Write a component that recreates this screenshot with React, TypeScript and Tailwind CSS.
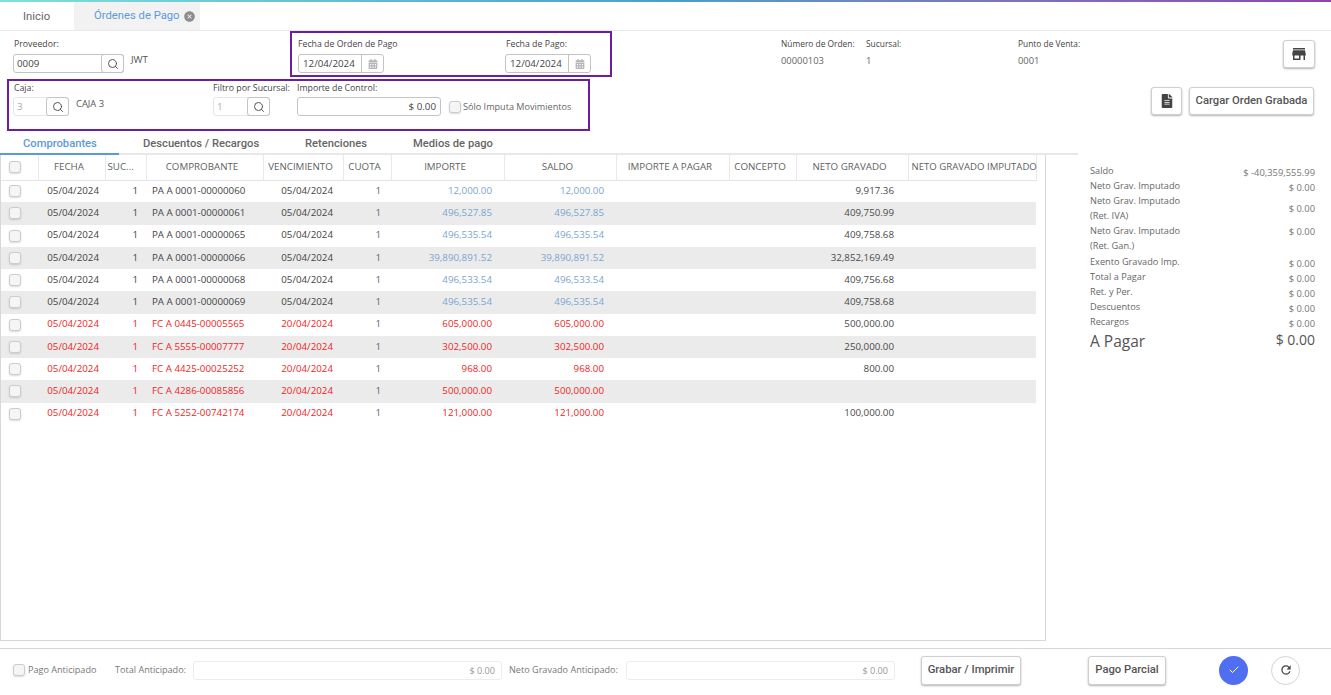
import React from 'react';
import { FaCalendarAlt, FaFileAlt } from 'react-icons/fa';
import { IoCloseCircle } from 'react-icons/io5';
import { MdStore, MdRefresh } from 'react-icons/md';
import { Search, Check } from 'lucide-react';

const sans = "font-['Open_Sans',sans-serif]";
const roboto = "font-['Roboto',sans-serif]";

type Row = {
  fecha: string;
  comp: string;
  venc: string;
  importe: string;
  saldo: string;
  neto: string;
};

const pagos: Row[] = [
  { fecha: '05/04/2024', comp: 'PA A 0001-00000060', venc: '05/04/2024', importe: '12,000.00', saldo: '12,000.00', neto: '9,917.36' },
  { fecha: '05/04/2024', comp: 'PA A 0001-00000061', venc: '05/04/2024', importe: '496,527.85', saldo: '496,527.85', neto: '409,750.99' },
  { fecha: '05/04/2024', comp: 'PA A 0001-00000065', venc: '05/04/2024', importe: '496,535.54', saldo: '496,535.54', neto: '409,758.68' },
  { fecha: '05/04/2024', comp: 'PA A 0001-00000066', venc: '05/04/2024', importe: '39,890,891.52', saldo: '39,890,891.52', neto: '32,852,169.49' },
  { fecha: '05/04/2024', comp: 'PA A 0001-00000068', venc: '05/04/2024', importe: '496,533.54', saldo: '496,533.54', neto: '409,756.68' },
  { fecha: '05/04/2024', comp: 'PA A 0001-00000069', venc: '05/04/2024', importe: '496,535.54', saldo: '496,535.54', neto: '409,758.68' },
];

const facturas: Row[] = [
  { fecha: '05/04/2024', comp: 'FC A 0445-00005565', venc: '20/04/2024', importe: '605,000.00', saldo: '605,000.00', neto: '500,000.00' },
  { fecha: '05/04/2024', comp: 'FC A 5555-00007777', venc: '20/04/2024', importe: '302,500.00', saldo: '302,500.00', neto: '250,000.00' },
  { fecha: '05/04/2024', comp: 'FC A 4425-00025252', venc: '20/04/2024', importe: '968.00', saldo: '968.00', neto: '800.00' },
  { fecha: '05/04/2024', comp: 'FC A 4286-00085856', venc: '20/04/2024', importe: '500,000.00', saldo: '500,000.00', neto: '' },
  { fecha: '05/04/2024', comp: 'FC A 5252-00742174', venc: '20/04/2024', importe: '121,000.00', saldo: '121,000.00', neto: '100,000.00' },
];

const resumen = [
  { label: 'Saldo', value: '$ -40,359,555.99', h: 'h-[15px]', pt: 'pt-[2px]' },
  { label: 'Neto Grav. Imputado', value: '$ 0.00', h: 'h-[15px]', pt: 'pt-[2px]' },
  { label: 'Neto Grav. Imputado (Ret. IVA)', value: '$ 0.00', h: 'h-[30px]', pt: 'pt-[8px]' },
  { label: 'Neto Grav. Imputado (Ret. Gan.)', value: '$ 0.00', h: 'h-[31px]', pt: 'pt-[1px]' },
  { label: 'Exento Gravado Imp.', value: '$ 0.00', h: 'h-[15px]', pt: 'pt-[2px]' },
  { label: 'Total a Pagar', value: '$ 0.00', h: 'h-[15px]', pt: 'pt-[2px]' },
  { label: 'Ret. y Per.', value: '$ 0.00', h: 'h-[15px]', pt: 'pt-[2px]' },
  { label: 'Descuentos', value: '$ 0.00', h: 'h-[15px]', pt: 'pt-[2px]' },
  { label: 'Recargos', value: '$ 0.00', h: 'h-[15px]', pt: 'pt-[2px]' },
];

const Box = () => (
  <span className="block w-[12px] h-[12px] rounded-[3px] border border-[#cccccc] bg-[#f5f5f5] shadow-[0_1px_2px_rgba(0,0,0,0.15)] shrink-0" />
);

const Label = ({ children, className = '' }: { children: React.ReactNode; className?: string }) => (
  <div className={`leading-[12px] text-[#444] whitespace-nowrap ${className}`}>{children}</div>
);

const SearchInput = ({ value, w, off }: { value: string; w: string; off?: boolean }) => (
  <div className={`flex h-[19px] ${w} border ${off ? 'border-[#e6e6e6]' : 'border-[#c4c4c4]'} rounded-[3px] bg-white`}>
    <span className={`flex-1 pl-[3px] text-[9.75px] leading-[18px] ${off ? 'text-[#aaa]' : 'text-[#444]'}`}>{value}</span>
    <span className="w-[23px] -my-[1px] -mr-[1px] flex items-center justify-center border border-[#c4c4c4] rounded-[3px]">
      <Search size={12} strokeWidth={2} className="text-[#555]" />
    </span>
  </div>
);

const DateInput = ({ value }: { value: string }) => (
  <div className="flex h-[19px] w-[86px] border border-[#c4c4c4] rounded-[3px] bg-white">
    <span className="flex-1 pl-[4px] text-[9.75px] leading-[18px] text-[#444]">{value}</span>
    <span className="w-[22px] flex items-center justify-center border-l border-[#c4c4c4]">
      <FaCalendarAlt size={10} className="text-[#b5b5b5]" />
    </span>
  </div>
);

const OutlineButton = ({ children, className = '' }: { children: React.ReactNode; className?: string }) => (
  <div className={`flex items-center justify-center border border-[#cfcfcf] rounded-[3px] bg-white shadow-[0_1px_2px_rgba(0,0,0,0.3)] ${roboto} font-medium text-[11.25px] text-[#555] whitespace-nowrap ${className}`}>
    {children}
  </div>
);

const headers = ['FECHA', 'SUC...', 'COMPROBANTE', 'VENCIMIENTO', 'CUOTA', 'IMPORTE', 'SALDO', 'IMPORTE A PAGAR', 'CONCEPTO', 'NETO GRAVADO', 'NETO GRAVADO IMPUTADO'];

const Table = () => {
  const filas = [...pagos.map((r) => ({ ...r, rojo: false })), ...facturas.map((r) => ({ ...r, rojo: true }))];
  return (
    <table className="table-fixed border-collapse w-[1035px] text-[9.75px] text-[#444]">
      <colgroup>
        <col className="w-[37px]" />
        <col className="w-[67px]" />
        <col className="w-[41px]" />
        <col className="w-[117px]" />
        <col className="w-[80px]" />
        <col className="w-[48px]" />
        <col className="w-[113px]" />
        <col className="w-[112px]" />
        <col className="w-[113px]" />
        <col className="w-[67px]" />
        <col className="w-[112px]" />
        <col className="w-[128px]" />
      </colgroup>
      <thead>
        <tr className="h-[25px] border-b border-[#e4e4e4]">
          <th className="border-r border-[#e9e9e9] pl-[8px] pr-0">
            <Box />
          </th>
          {headers.map((h) => (
            <th
              key={h}
              className={`border-r border-[#e9e9e9] font-medium text-[#5f5f5f] whitespace-nowrap ${
                h === 'SUC...'
                  ? 'text-[9.75px] text-left pl-[2px]'
                  : h === 'NETO GRAVADO IMPUTADO'
                    ? 'text-[9.6px] text-left pl-[3px]'
                    : 'text-[9.75px] text-center pr-[5px]'
              }`}
            >
              {h}
            </th>
          ))}
        </tr>
      </thead>
      <tbody>
        {filas.map((r, i) => (
          <tr key={r.comp} className={`h-[22.25px] ${i % 2 === 1 ? 'bg-[#ebebeb]' : 'bg-white'} ${r.rojo ? 'text-[#f02525]' : ''}`}>
            <td className="pl-[8px]">
              <Box />
            </td>
            <td className="text-right pr-[6px]">{r.fecha}</td>
            <td className="text-right pr-[8px]">1</td>
            <td className="pl-[6px] whitespace-nowrap">{r.comp}</td>
            <td className="text-right pr-[10px]">{r.venc}</td>
            <td className="text-right pr-[10px] text-[#56687a]">1</td>
            <td className={`text-right pr-[12px] ${r.rojo ? '' : 'text-[#7ba5d0]'}`}>{r.importe}</td>
            <td className={`text-right pr-[12px] ${r.rojo ? '' : 'text-[#7ba5d0]'}`}>{r.saldo}</td>
            <td />
            <td />
            <td className="text-right pr-[14px] text-[#4a4a4a]">{r.neto}</td>
            <td />
          </tr>
        ))}
      </tbody>
    </table>
  );
};

const Summary = () => (
  <div className="w-[225px] ml-[44px] pt-[8px] text-[#666] shrink-0">
    {resumen.map((r) => (
      <div key={r.label} className={`flex justify-between items-start ${r.h} leading-[15px]`}>
        <span className="w-[100px] text-[9.2px]">{r.label}</span>
        <span className={`text-[9.4px] text-[#777] ${r.pt}`}>{r.value}</span>
      </div>
    ))}
    <div className="flex justify-between items-center text-[#555]">
      <span className="text-[15.5px] leading-[24px]">A Pagar</span>
      <span className="text-[14px] leading-[20px] pb-[3px]">$ 0.00</span>
    </div>
  </div>
);

const App = () => {
  return (
    <div className={`w-[1331px] h-[695px] overflow-hidden bg-white flex flex-col ${sans}`}>
      <div className="h-[2px] w-full shrink-0 bg-gradient-to-r from-[#7fe0da] via-[#4a9fc9] to-[#8e44ad]" />

      {/* pestañas */}
      <div className="flex h-[29px] shrink-0 border-b border-[#e8e8e8]">
        <div className={`w-[74px] pl-[23px] leading-[29px] text-[11.25px] text-[#666] ${roboto}`}>Inicio</div>
        <div className={`w-[126px] pl-[20px] flex items-center gap-[3px] bg-[#f2f2f2] text-[11.25px] text-[#5b9ad8] ${roboto}`}>
          <span>Órdenes de Pago</span>
          <IoCloseCircle size={13} className="text-[#8c8c8c]" />
        </div>
      </div>

      {/* primera fila */}
      <div className="flex h-[48px] shrink-0">
        <div className="w-[290px] pl-[13px] pt-[7px] shrink-0">
          <Label className="pl-[1px] text-[8.75px]">Proveedor:</Label>
          <div className="flex mt-[4px] gap-[7px]">
            <SearchInput value="0009" w="w-[111px]" />
            <span className="text-[9.75px] leading-[12px] text-[#555]">JWT</span>
          </div>
        </div>
        <div className="flex w-[322px] h-[46px] border-2 border-[#6a1ea0] pl-[6px] pt-[5px] shrink-0">
          <div className="w-[207px]">
            <Label className="text-[8.75px]">Fecha de Orden de Pago</Label>
            <div className="mt-[4px]">
              <DateInput value="12/04/2024" />
            </div>
          </div>
          <div>
            <Label className="pl-[1px] text-[8.75px]">Fecha de Pago:</Label>
            <div className="mt-[4px]">
              <DateInput value="12/04/2024" />
            </div>
          </div>
        </div>
        <div className="flex pt-[7px] pl-[169px] text-[#555]">
          <div className="w-[85px]">
            <Label className="text-[8.4px]">Número de Orden:</Label>
            <div className="text-[9.4px] leading-[12px] mt-[5px] text-[#666]">00000103</div>
          </div>
          <div className="w-[152px]">
            <Label className="text-[8.4px]">Sucursal:</Label>
            <div className="text-[9.4px] leading-[12px] mt-[5px] text-[#666]">1</div>
          </div>
          <div className="w-[265px]">
            <Label className="text-[8.4px]">Punto de Venta:</Label>
            <div className="text-[9.4px] leading-[12px] mt-[5px] text-[#666]">0001</div>
          </div>
          <OutlineButton className="w-[32px] h-[28px] mt-[2px]">
            <MdStore size={18} className="text-[#444]" />
          </OutlineButton>
        </div>
      </div>

      {/* segunda fila */}
      <div className="flex h-[52px] shrink-0 pl-[7px]">
        <div className="flex w-[583px] h-[52px] border-2 border-[#6a1ea0] pl-[4px] pt-[1px] shrink-0">
          <div className="w-[200px]">
            <Label className="pl-[1px] text-[8.75px]">Caja:</Label>
            <div className="flex mt-[3px] gap-[7px]">
              <SearchInput value="3" w="w-[56px]" off />
              <span className="text-[9.4px] leading-[14px] text-[#555]">CAJA 3</span>
            </div>
          </div>
          <div className="w-[84px]">
            <Label className="text-[8.8px]">Filtro por Sucursal:</Label>
            <div className="mt-[3px]">
              <SearchInput value="1" w="w-[57px]" off />
            </div>
          </div>
          <div className="w-[152px]">
            <Label className="text-[8.75px]">Importe de Control:</Label>
            <div className="mt-[3px] h-[19px] w-[144px] border border-[#c4c4c4] rounded-[3px] pr-[4px] text-right text-[9.75px] leading-[18px] text-[#444]">
              $ 0.00
            </div>
          </div>
          <div className="flex items-center gap-[2px] h-[19px] mt-[15px]">
            <Box />
            <span className="text-[9.1px] text-[#666] whitespace-nowrap">Sólo Imputa Movimientos</span>
          </div>
        </div>
        <div className="flex gap-[7px] pl-[561px] pt-[8px]">
          <OutlineButton className="w-[31px] h-[28px]">
            <FaFileAlt size={14} className="text-[#444]" />
          </OutlineButton>
          <OutlineButton className="w-[125px] h-[28px]">Cargar Orden Grabada</OutlineButton>
        </div>
      </div>

      {/* pestañas del detalle */}
      <div className={`flex h-[24px] w-[1078px] shrink-0 border-b-2 border-[#e8e8e8] text-[11.2px] font-medium text-[#666] ${roboto}`}>
        <div className="w-[119px] h-[24px] pl-[23px] leading-[25px] border-b-2 border-[#5b9ad8] text-[#5b9ad8]">Comprobantes</div>
        <div className="w-[186px] pl-[24px] leading-[25px]">Descuentos / Recargos</div>
        <div className="w-[108px] leading-[25px]">Retenciones</div>
        <div className="leading-[25px]">Medios de pago</div>
      </div>

      {/* cuerpo */}
      <div className="flex h-[486px] shrink-0">
        <div className="w-[1046px] h-[486px] border-x border-b border-[#d8d8d8] shrink-0">
          <Table />
        </div>
        <Summary />
      </div>

      {/* pie */}
      <div className="flex items-center h-[40px] mt-[7px] border-t border-[#d8d8d8] pl-[13px] pt-[3px] text-[9.1px] text-[#777] shrink-0">
        <Box />
        <span className="ml-[3px] w-[87px] whitespace-nowrap">Pago Anticipado</span>
        <span className="w-[78px] whitespace-nowrap">Total Anticipado:</span>
        <div className="w-[309px] h-[19px] border border-[#ececec] rounded-[3px] pr-[6px] text-right leading-[18px] text-[#999]">$ 0.00</div>
        <span className="ml-[7px] w-[117px] whitespace-nowrap">Neto Gravado Anticipado:</span>
        <div className="w-[269px] h-[19px] border border-[#ececec] rounded-[3px] pr-[6px] text-right leading-[18px] text-[#999]">$ 0.00</div>
        <OutlineButton className="ml-[26px] w-[100px] h-[29px]">Grabar / Imprimir</OutlineButton>
        <OutlineButton className="ml-[67px] w-[78px] h-[29px]">Pago Parcial</OutlineButton>
        <div className="ml-[53px] w-[29px] h-[29px] rounded-full bg-[#4f6ef2] flex items-center justify-center">
          <Check size={12} className="text-white" />
        </div>
        <div className="ml-[23px] w-[29px] h-[29px] rounded-full border border-[#d4d4d4] flex items-center justify-center">
          <MdRefresh size={14} className="text-[#444]" />
        </div>
      </div>
    </div>
  );
};

export default App;
